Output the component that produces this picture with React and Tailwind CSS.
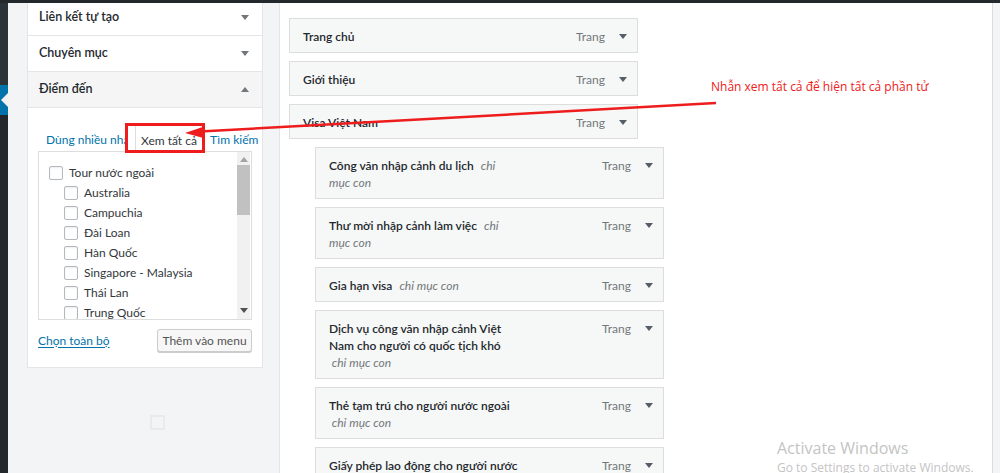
const SANS = "font-['Lato','Open_Sans',sans-serif]";

const DESTINATIONS = [
  { label: "Tour nước ngoài", child: false },
  { label: "Australia", child: true },
  { label: "Campuchia", child: true },
  { label: "Đài Loan", child: true },
  { label: "Hàn Quốc", child: true },
  { label: "Singapore - Malaysia", child: true },
  { label: "Thái Lan", child: true },
  { label: "Trung Quốc", child: true },
];

const TOP_ITEMS = ["Trang chủ", "Giới thiệu", "Visa Việt Nam"];

// each sub item: lines of the title, the last line may carry the "chỉ mục con" note
const SUB_ITEMS = [
  { lines: [["Công văn nhập cảnh du lịch", "chỉ"], [null, "mục con"]] },
  { lines: [["Thư mời nhập cảnh làm việc", "chỉ"], [null, "mục con"]] },
  { lines: [["Gia hạn visa", "chỉ mục con"]] },
  {
    lines: [
      ["Dịch vụ công văn nhập cảnh Việt", null],
      ["Nam cho người có quốc tịch khó", null],
      [null, " chỉ mục con"],
    ],
  },
  { lines: [["Thẻ tạm trú cho người nước ngoài", null], [null, " chỉ mục con"]] },
  { lines: [["Giấy phép lao động cho người nước", null], ["ngoài", null]] },
];

function Caret({ up = false, className = "" }) {
  return (
    <svg viewBox="0 0 8 5" className={`h-[5px] w-[8px] ${className}`} aria-hidden="true">
      <path d={up ? "M0 5h8L4 0z" : "M0 0h8L4 5z"} fill="currentColor" />
    </svg>
  );
}

function Checkbox() {
  return <span className="inline-block h-[14px] w-[14px] shrink-0 rounded-[2px] border border-[#b4b9be] bg-white shadow-[inset_0_1px_2px_rgba(0,0,0,0.08)]" />;
}

function SectionHeader({ title, open = false }) {
  return (
    <div
      className={`flex h-[36px] items-center justify-between border-b border-[#e5e5e5] pl-[11px] pr-[13px] ${
        open ? "bg-[#f5f5f5]" : "bg-white"
      }`}
    >
      <span className="text-[12.5px] font-semibold text-[#23282d]">{title}</span>
      <Caret up={open} className="text-[#72777c]" />
    </div>
  );
}

function DestinationsBox() {
  return (
    <div className="px-[10px] pt-[17px] pb-[15px]">
      <div className="flex h-[26px] items-end text-[12px]">
        <div className="w-[97px] shrink-0 overflow-hidden whitespace-nowrap pl-[8px] pr-[8px] pb-[2px] text-[#0073aa]">
          <div className="overflow-hidden">Dùng nhiều nhất</div>
        </div>
        <div className="relative -mb-px flex h-[27px] w-[68px] shrink-0 items-center justify-center border border-b-0 border-[#dddddd] bg-white pt-[3px] text-[#32373c]">
          Xem tất cả
        </div>
        <div className="shrink-0 whitespace-nowrap pl-[7px] pb-[2px] text-[#0073aa]">Tìm kiếm</div>
      </div>
      <div className="flex h-[169px] border border-[#dddddd] bg-white">
        <div className="flex-1 overflow-hidden pt-[11px] pl-[10px]">
          {DESTINATIONS.map((d) => (
            <div key={d.label} className={`flex h-[20px] items-center gap-[6px] ${d.child ? "pl-[15px]" : ""}`}>
              <Checkbox />
              <span className="whitespace-nowrap text-[12px] text-[#32373c]">{d.label}</span>
            </div>
          ))}
        </div>
        <div className="mr-px flex w-[13px] flex-col items-center bg-[#f1f1f1]">
          <Caret up className="mt-[5px] h-[4px] w-[6px] text-[#a3a3a3]" />
          <div className="mt-[3px] h-[50px] w-full bg-[#c1c1c1]" />
          <div className="flex-1" />
          <Caret className="mb-[6px] h-[4px] w-[6px] text-[#505050]" />
        </div>
      </div>
      <div className="mt-[9px] flex items-center justify-between">
        <a className="text-[12px] text-[#0073aa] underline underline-offset-2">Chọn toàn bộ</a>
        <button className="h-[23px] w-[95px] rounded-[3px] border border-[#cccccc] bg-[#f7f7f7] text-[12px] text-[#555555] shadow-[0_1px_0_#cccccc]">
          Thêm vào menu
        </button>
      </div>
    </div>
  );
}

function MenuItem({ children, type = "Trang" }) {
  return (
    <div className="flex items-start justify-between border border-[#dddddd] bg-[#f6f7f7] pt-[9px] pb-[7px] pl-[13px] pr-[10px]">
      <div>{children}</div>
      <div className="flex h-[17px] items-center gap-[14px]">
        <span className="text-[12px] text-[#72777c]">{type}</span>
        <Caret className="text-[#555d66]" />
      </div>
    </div>
  );
}

function MenuStructure() {
  return (
    <div className="flex flex-col gap-[8px] pt-[18px] pl-[9px]">
      {TOP_ITEMS.map((t) => (
        <div key={t} className="w-[349px]">
          <MenuItem>
            <div className="flex h-[17px] items-center text-[12px] font-semibold text-[#23282d]">{t}</div>
          </MenuItem>
        </div>
      ))}
      {SUB_ITEMS.map((it, i) => (
        <div key={i} className="ml-[26px] w-[349px]">
          <MenuItem>
            {it.lines.map(([title, note], j) => (
              <div key={j} className="flex h-[17px] items-center whitespace-pre text-[12px]">
                {title && <span className="font-semibold text-[#23282d]">{title}</span>}
                {note && <span className={`italic text-[#72777c] ${title ? "ml-[7px]" : ""}`}>{note}</span>}
              </div>
            ))}
          </MenuItem>
        </div>
      ))}
    </div>
  );
}

export default function App() {
  return (
    <div className={`relative h-[473px] w-[1000px] overflow-hidden bg-white ${SANS}`}>
      <div className="flex h-full">
        {/* admin menu edge */}
        <div className="flex w-[8px] flex-col bg-[#23282d]">
          <div className="h-[85px] bg-[#2c3338]" />
          <div className="flex h-[30px] items-center justify-end bg-[#0073aa]">
            <svg viewBox="0 0 7 14" className="h-[14px] w-[7px]" aria-hidden="true">
              <path d="M7 0v14L0 7z" fill="#f1f1f1" />
            </svg>
          </div>
        </div>

        {/* left column */}
        <div className="w-[271px] bg-[#f3f4f5] pl-[19px]">
          <div className="w-[236px] border border-t-0 border-[#e5e5e5] bg-white">
            <SectionHeader title="Liên kết tự tạo" />
            <SectionHeader title="Chuyên mục" />
            <SectionHeader title="Điểm đến" open />
            <DestinationsBox />
          </div>
          <div className="mt-[47px] ml-[123px] h-[15px] w-[15px] border-2 border-[#e9eaeb]" />
        </div>

        {/* menu structure */}
        <div className="flex-1 border-l border-[#e5e5e5] bg-white">
          <MenuStructure />
        </div>

        <div className="w-[8px] border-l border-[#dcdcde] bg-[#f3f4f5]" />
      </div>

      {/* top admin bar */}
      <div className="absolute inset-x-0 top-0 h-[3px] bg-[#23282d]" />

      {/* annotation */}
      <div className="absolute left-[125px] top-[123px] h-[30px] w-[80px] border-[3px] border-[#ee1c1c]" />
      <svg className="pointer-events-none absolute inset-0 h-[473px] w-[1000px]" viewBox="0 0 1000 473" aria-hidden="true">
        <line x1="716" y1="103" x2="200" y2="131.5" stroke="#ee1c1c" strokeWidth="2.5" />
        <polygon points="185,133 203.3,138 202.7,127" fill="#ee1c1c" />
      </svg>
      <div className="absolute left-[711px] top-[78px] font-['Open_Sans',sans-serif] text-[12px] text-[#ee2020]">
        Nhẫn xem tất cả để hiện tất cả phần tử
      </div>

      {/* activation watermark */}
      <div className="absolute left-[777px] top-[437px] font-['Open_Sans',sans-serif] text-[#c4c4c4]">
        <div className="text-[16px] leading-[22px]">Activate Windows</div>
        <div className="text-[12px] leading-[18px]">Go to Settings to activate Windows.</div>
      </div>
    </div>
  );
}
